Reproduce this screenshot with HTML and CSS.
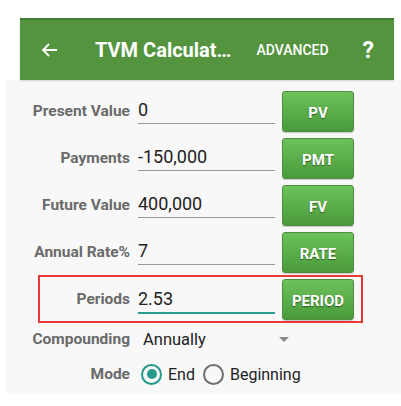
FILE: index.html
```html
<!DOCTYPE html>
<html>
<head>
<meta charset="utf-8">
<link rel="stylesheet" href="styles.css">
</head>
<body>
<div class="screen">
  <header class="appbar">
    <svg class="back" width="17" height="14" viewBox="0 0 17 14"><path d="M16 7H2M8 1L2 7l6 6" fill="none" stroke="#fff" stroke-width="1.8"/></svg>
    <span class="title">TVM Calculat…</span>
    <span class="action">ADVANCED</span>
    <span class="help">?</span>
  </header>
  <main class="content">
    <div class="row">
      <span class="label">Present Value</span>
      <span class="field">0</span>
      <button class="btn">PV</button>
    </div>
    <div class="row">
      <span class="label">Payments</span>
      <span class="field">-150,000</span>
      <button class="btn">PMT</button>
    </div>
    <div class="row">
      <span class="label">Future Value</span>
      <span class="field">400,000</span>
      <button class="btn">FV</button>
    </div>
    <div class="row">
      <span class="label">Annual Rate%</span>
      <span class="field">7</span>
      <button class="btn">RATE</button>
    </div>
    <div class="row highlight">
      <span class="label">Periods</span>
      <span class="field active">2.53</span>
      <button class="btn">PERIOD</button>
    </div>
    <div class="option compounding">
      <span class="label">Compounding</span>
      <span class="select">Annually<span class="caret"></span></span>
    </div>
    <div class="option mode">
      <span class="label">Mode</span>
      <span class="radio checked"></span><span class="rtext">End</span>
      <span class="radio"></span><span class="rtext">Beginning</span>
    </div>
  </main>
</div>
</body>
</html>
```
FILE: styles.css
```css
html, body {
  margin: 0;
  padding: 0;
  background: #ffffff;
}
body {
  font-family: Roboto, "Liberation Sans", sans-serif;
}
.screen {
  padding-top: 18px;
}
.appbar {
  margin-left: 20px;
  width: 374px;
  height: 60px;
  background: #54943f;
  border-top: 2px solid #3f7d33;
  display: flex;
  align-items: center;
  color: #fff;
  box-shadow: 0 1px 2px rgba(0,0,0,0.15);
  position: relative;
}
.back {
  margin-left: 21px;
}
.title {
  margin-left: 37px;
  font-size: 20px;
  font-weight: 700;
  white-space: nowrap;
}
.action {
  margin-left: 25px;
  font-size: 14px;
  font-weight: 500;
}
.help {
  margin-left: 34px;
  font-size: 23px;
  font-weight: 700;
}
.content {
  margin-left: 6px;
  background: #f8f8f8;
  height: 303px;
  padding-top: 11px;
  display: flex;
  flex-direction: column;
}
.row {
  display: grid;
  grid-template-columns: 124px 137px 72px;
  column-gap: 8px;
  height: 41px;
  margin-bottom: 6px;
  position: relative;
}
.row .btn {
  margin-left: -1px;
}
.label {
  font-size: 15.5px;
  font-weight: 700;
  color: #6a6a6a;
  text-align: right;
  line-height: 20px;
  padding-top: 10px;
  white-space: nowrap;
}
.field {
  font-size: 18px;
  color: #222;
  line-height: 22px;
  padding-top: 8px;
  height: 24px;
  border-bottom: 1px solid #9a9a9a;
}
.field.active {
  height: 24px;
  padding-top: 8px;
  border-bottom: 2px solid #2a9d90;
  margin-top: 1px;
}
.btn {
  width: 72px;
  height: 41px;
  border: 1px solid #4d8f3f;
  border-radius: 3px;
  background: linear-gradient(#6dc15a, #4a9a3b);
  color: #fff;
  font-family: Roboto, "Liberation Sans", sans-serif;
  font-size: 15px;
  font-weight: 700;
  padding: 3px 0 0 0;
  text-shadow: 0 1px 1px rgba(0,0,0,0.45);
  box-shadow: 0 1px 1px rgba(0,0,0,0.2);
}
.highlight::after {
  content: "";
  position: absolute;
  left: 32px;
  top: -4px;
  width: 321px;
  height: 44px;
  border: 2px solid #e53a35;
}
.option {
  display: flex;
  align-items: center;
  height: 24px;
}
.option .label {
  width: 124px;
  padding-top: 0;
}
.compounding {
  margin-top: 1px;
}
.select {
  margin-left: 13px;
  width: 146px;
  display: flex;
  justify-content: space-between;
  align-items: center;
  font-size: 16.5px;
  color: #222;
}
.caret {
  width: 0;
  height: 0;
  border-left: 5px solid transparent;
  border-right: 5px solid transparent;
  border-top: 5px solid #888;
}
.mode {
  margin-top: 11px;
}
.radio {
  width: 17px;
  height: 17px;
  border: 2px solid #6f6f6f;
  border-radius: 50%;
  box-sizing: content-box;
  margin-left: 8px;
  position: relative;
}
.mode .label + .radio {
  margin-left: 11px;
}
.radio.checked {
  border-color: #25998b;
}
.radio.checked::after {
  content: "";
  position: absolute;
  left: 3.5px;
  top: 3.5px;
  width: 10px;
  height: 10px;
  border-radius: 50%;
  background: #25998b;
}
.rtext {
  margin-left: 6px;
  font-size: 16px;
  color: #222;
}
```
